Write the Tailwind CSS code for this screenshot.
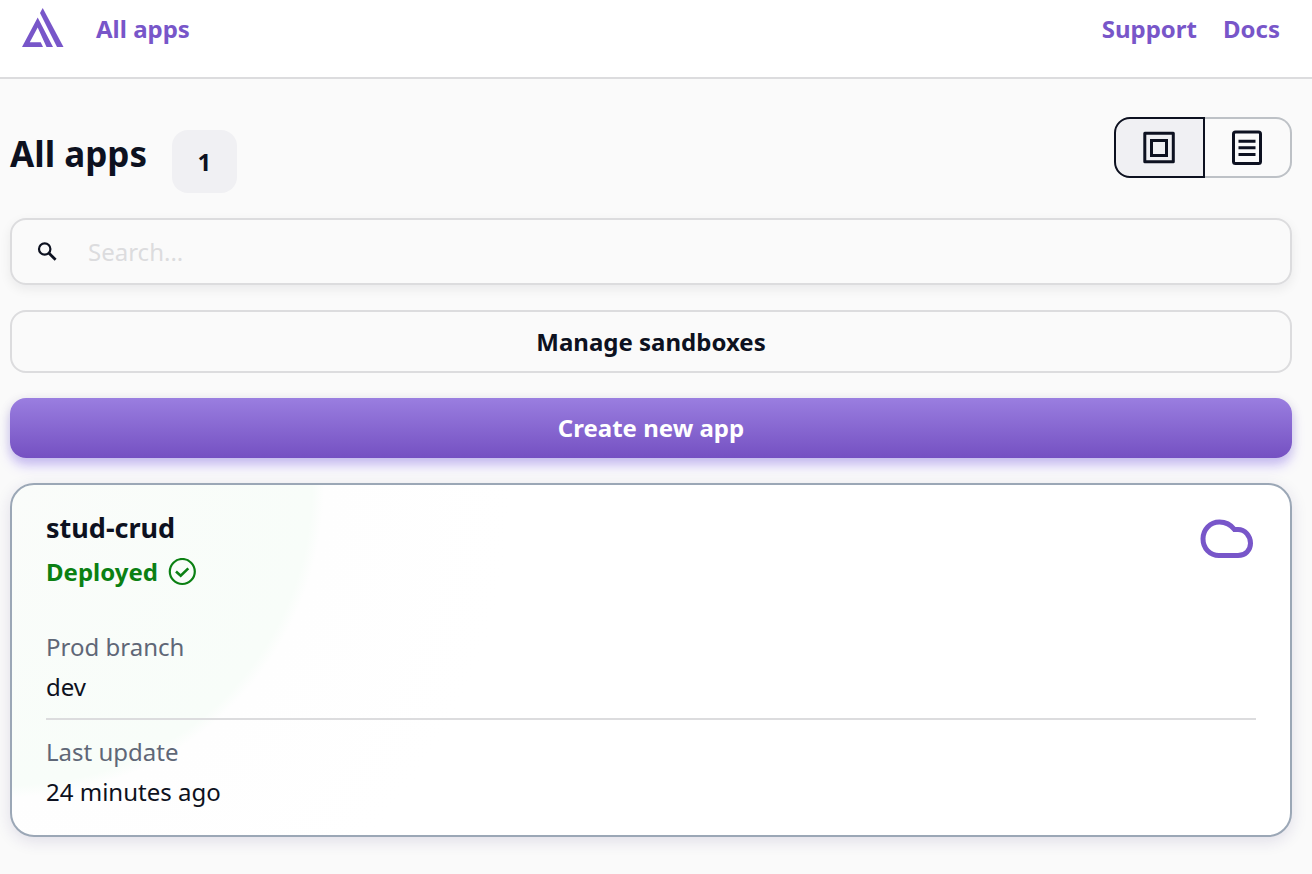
<!DOCTYPE html>
<html lang="en">
<head>
<meta charset="utf-8">
<meta name="viewport" content="width=device-width, initial-scale=1">
<title>All apps</title>
<script src="https://cdn.jsdelivr.net/npm/@tailwindcss/browser@4"></script>
</head>
<body class="min-h-screen bg-[#fafafa] font-['Noto_Sans','Open_Sans',sans-serif] text-2xl text-[#0d1120]">
<header class="flex h-[79px] items-start justify-between border-b-2 border-[#dcdcde] bg-white pl-[22px] pr-8 font-bold text-[#7856c9]">
  <div class="flex items-start gap-8">
    <a href="#" aria-label="Home" class="pt-2">
      <svg class="h-10 w-[42px]" viewBox="0 0 42 40" fill="currentColor" aria-hidden="true">
        <path fill-rule="evenodd" d="M15.700 9.500L31 39H24.500L15.700 19.500L7.800 34.300H18.700L21 39H0Z"/>
        <path d="M18 4.900L20.700 0L41.500 39H35Z"/>
      </svg>
    </a>
    <a href="#" class="pt-[13px]">All apps</a>
  </div>
  <nav class="flex gap-[26px] pt-[13px]">
    <a href="#">Support</a>
    <a href="#">Docs</a>
  </nav>
</header>
<main class="flex flex-col gap-[25px] pb-9 pl-[10px] pr-5 pt-[38px]">
  <div class="flex items-start justify-between">
    <div class="flex items-start gap-[25px] pt-[13px]">
      <h1 class="text-[35px] font-bold leading-12">All apps</h1>
      <span class="flex h-[63px] w-[65px] items-center justify-center rounded-2xl bg-[#f0f0f3] font-bold">1</span>
    </div>
    <div class="flex h-[61px]" role="group" aria-label="View">
      <button type="button" aria-label="Card view" aria-pressed="true" class="flex w-[91px] items-center justify-center rounded-l-2xl border-2 border-[#0d1120] bg-[#f0f0f3]">
        <svg class="h-[33px] w-[33px]" viewBox="0 0 33 33" fill="none" stroke="currentColor" stroke-width="3" aria-hidden="true"><path d="M1.800 2.300H30.300V30.800H1.800Z" stroke-linejoin="round"/><path d="M8.500 9.500H23.500V24.500H8.500Z"/></svg>
      </button>
      <button type="button" aria-label="List view" aria-pressed="false" class="flex w-[87px] items-center justify-center rounded-r-2xl border-2 border-l-0 border-[#bdc1c6]">
        <svg class="h-[35px] w-[31px]" viewBox="0 0 31 35" fill="none" stroke="currentColor" stroke-width="3" aria-hidden="true"><rect x="1.500" y="2" width="27" height="31.500" rx="2"/><path d="M6.500 11.300H23.500M6.500 17.800H23.500M6.500 24.500H23.500"/></svg>
      </button>
    </div>
  </div>
  <label class="flex h-[67px] items-center gap-7 rounded-2xl border-2 border-[#dcdcde] px-6 shadow-[0_4px_12px_rgba(13,17,32,0.07)]">
    <svg class="size-6 shrink-0" viewBox="0 0 24 24" fill="none" stroke="currentColor" stroke-width="2.200" aria-hidden="true"><circle cx="8.700" cy="9" r="5.700"/><path d="M12.800 13L19.600 19.800" stroke-width="2.800"/></svg>
    <input type="search" aria-label="Search apps" placeholder="Search..." class="min-w-0 flex-1 bg-transparent outline-none placeholder:text-[#dcdcde]">
  </label>
  <button type="button" class="h-[63px] rounded-2xl border-2 border-[#dcdcde] font-bold">Manage sandboxes</button>
  <button type="button" class="h-[60px] rounded-2xl bg-linear-to-b from-[#9a7ee0] to-[#7550c2] font-bold text-white shadow-[0_2px_12px_rgba(13,17,32,0.10),0_8px_12px_rgba(165,140,255,0.45)]">Create new app</button>
  <article class="flex flex-col rounded-3xl border-2 border-[#9ba7b6] bg-white bg-[radial-gradient(circle_at_0_0,#fafcfa_0,#f8fdf9_300px,#fefefe_312px,#ffffff_500px)] px-[34px] pb-[23px] pt-[23px] shadow-[0_4px_16px_rgba(50,30,110,0.13)]">
    <div class="flex items-start justify-between">
      <div>
        <h2 class="leading-10 font-bold text-[27px]">stud-crud</h2>
        <p class="flex items-center gap-[10px] font-bold leading-12 text-[#0b8013]">Deployed
          <svg class="size-7" viewBox="0 0 28 28" fill="none" stroke="currentColor" stroke-width="2.200" aria-hidden="true"><circle cx="14.300" cy="13.500" r="12.500"/><path d="M8 13.500L12.700 17.800L20.300 10.400" stroke-width="2.600"/></svg>
        </p>
      </div>
      <svg class="mt-[11px] mr-[2px] h-10 w-[54px] text-[#7856c9]" viewBox="0 0 54 40" fill="none" stroke="currentColor" stroke-width="5" aria-hidden="true"><path d="M19.500 3C10 3 3 10.500 3 19.800C3 29.500 10 36.500 19 36.500H38C45.500 36.500 50.500 31 50.500 24.200C50.500 17 45 10.500 38 10.500H34.500C31 6 26.500 3 19.500 3Z"/></svg>
    </div>
    <dl>
      <div class="border-b-2 border-[#dcdcde] pb-[11px] pt-[31px]"><dt class="leading-10 text-[#5f6777]">Prod branch</dt><dd class="leading-10">dev</dd></div>
      <div class="pt-3"><dt class="leading-10 text-[#5f6777]">Last update</dt><dd class="leading-10">24 minutes ago</dd></div>
    </dl>
  </article>
</main>
</body>
</html>
